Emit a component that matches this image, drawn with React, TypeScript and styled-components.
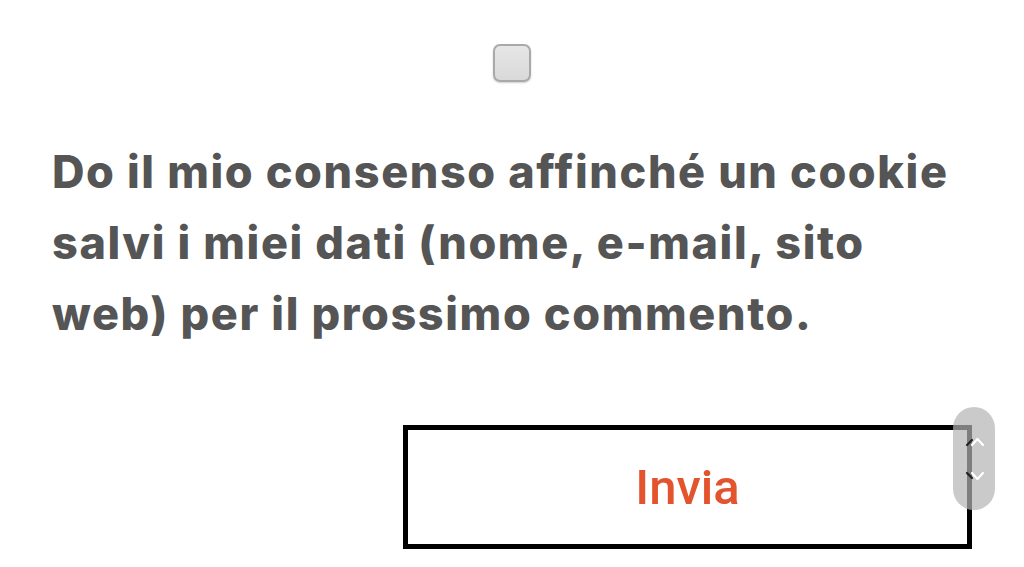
import React from 'react'
import styled, { createGlobalStyle } from 'styled-components'

const GlobalStyle = createGlobalStyle`
	html, body {
		margin: 0;
		padding: 0;
		background: #fff;
	}
	body {
		font-family: Inter, 'Liberation Sans', sans-serif;
		overflow: hidden;
	}
`

const App = () => {
	return (
		<>
			<GlobalStyle />
			<Page>
				<CheckRow>
					<CheckBox type="checkbox" />
				</CheckRow>
				<ConsentText>
					Do il mio consenso affinché un cookie salvi i miei dati (nome, e-mail, sito web) per il prossimo
					commento.
				</ConsentText>
				<SubmitRow>
					<SubmitButton type="button">Invia</SubmitButton>
				</SubmitRow>
				<ScrollPill>
					<svg width="42" height="103" viewBox="0 0 42 103" fill="none">
						{/* page arrows showing through */}
						<path d="M14 38 L19 33" stroke="#222" strokeWidth="2.2" strokeLinecap="round" />
						<path d="M14 66 L19 71" stroke="#222" strokeWidth="2.2" strokeLinecap="round" />
						<path d="M19 38 L24.5 32 L30 38" stroke="#fff" strokeWidth="2.2" strokeLinecap="round" strokeLinejoin="round" />
						<path d="M19 66 L24.5 72 L30 66" stroke="#fff" strokeWidth="2.2" strokeLinecap="round" strokeLinejoin="round" />
					</svg>
				</ScrollPill>
			</Page>
		</>
	)
}

export default App

const Page = styled.div`
	position: relative;
	width: 1024px;
	height: 567px;
	padding: 44px 52px 0 52px;
	box-sizing: border-box;
	display: flex;
	flex-direction: column;
`

const CheckRow = styled.div`
	display: flex;
	justify-content: center;
`

const CheckBox = styled.input`
	appearance: none;
	margin: 0;
	width: 38px;
	height: 38px;
	border-radius: 7px;
	border: 2px solid #a9a9a9;
	background: linear-gradient(#e6e6e6, #d9d9d9);
	box-shadow: 0 1px 2px rgba(0, 0, 0, 0.2);
	box-sizing: border-box;
`

const ConsentText = styled.p`
	margin: 54px 0 0 0;
	max-width: 910px;
	font-family: Inter, 'Noto Sans', sans-serif;
	font-weight: 800;
	font-size: 45px;
	line-height: 71px;
	color: #555555;
	letter-spacing: 1.6px;
`

const SubmitRow = styled.div`
	display: flex;
	justify-content: flex-end;
	margin-top: 76px;
`

const SubmitButton = styled.button`
	width: 569px;
	height: 124px;
	border: 5px solid #000;
	background: #fff;
	color: #e2532e;
	font-family: Roboto, 'Liberation Sans', sans-serif;
	font-weight: 500;
	font-size: 49px;
	padding: 0;
	cursor: pointer;
`

const ScrollPill = styled.div`
	position: absolute;
	left: 953px;
	top: 407px;
	width: 42px;
	height: 103px;
	border-radius: 21px;
	background: rgba(180, 180, 180, 0.7);
	overflow: hidden;
`
